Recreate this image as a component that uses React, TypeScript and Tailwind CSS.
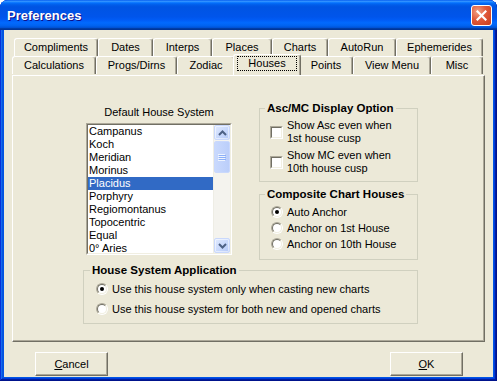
import React from "react";

const row1 = [
  { label: "Compliments", w: "w-[84px]" },
  { label: "Dates", w: "w-[55px]" },
  { label: "Interps", w: "w-[59px]" },
  { label: "Places", w: "w-[60px]" },
  { label: "Charts", w: "w-[56px]" },
  { label: "AutoRun", w: "w-[68px]" },
  { label: "Ephemerides", w: "w-[87px]" },
];

const row2 = [
  { label: "Calculations", w: "w-[84px]" },
  { label: "Progs/Dirns", w: "w-[81px]" },
  { label: "Zodiac", w: "w-[58px]" },
  { label: "Houses", w: "w-[68px]", selected: true },
  { label: "Points", w: "w-[54px]" },
  { label: "View Menu", w: "w-[78px]" },
  { label: "Misc", w: "w-[52px]" },
];

const houses = [
  "Campanus",
  "Koch",
  "Meridian",
  "Morinus",
  "Placidus",
  "Porphyry",
  "Regiomontanus",
  "Topocentric",
  "Equal",
  "0° Aries",
];

const tabBase =
  "flex-none h-[18px] flex items-center justify-center border-l border-t border-r border-l-white border-t-white border-r-[#716F64] rounded-t-[3px] shadow-[inset_-1px_0_0_#ACA899] leading-[13px]";

function Tab({ label, w, selected }: { label: string; w: string; selected?: boolean }) {
  if (selected) {
    return (
      <div
        className={`relative z-10 flex-none -mx-[2px] -mt-[2px] h-[21px] ${w} bg-[#ECE9D8] border-l border-t border-r border-l-white border-t-white border-r-[#716F64] rounded-t-[3px] shadow-[inset_-1px_0_0_#ACA899] px-[3px] pt-[1px]`}
      >
        <div className="h-[15px] border border-dotted border-black flex items-center justify-center leading-[13px]">
          {label}
        </div>
      </div>
    );
  }
  return <div className={`${tabBase} ${w}`}>{label}</div>;
}

function Checkbox() {
  return (
    <div className="flex-none w-[13px] h-[13px] border border-t-[#ACA899] border-l-[#ACA899] border-r-white border-b-white">
      <div className="w-full h-full border border-t-[#716F64] border-l-[#716F64] border-r-[#F1EFE2] border-b-[#F1EFE2] bg-white" />
    </div>
  );
}

function Radio({ checked }: { checked?: boolean }) {
  return (
    <div className="flex-none w-[12px] h-[12px] rounded-full border border-t-[#ACA899] border-l-[#ACA899] border-r-white border-b-white">
      <div className="w-full h-full rounded-full border border-t-[#716F64] border-l-[#716F64] border-r-[#F1EFE2] border-b-[#F1EFE2] bg-white flex items-center justify-center">
        {checked && <div className="w-[4px] h-[4px] rounded-full bg-black" />}
      </div>
    </div>
  );
}

function ScrollButton({ dir }: { dir: "up" | "down" }) {
  return (
    <div className="h-[15px] rounded-[2px] border border-[#C9D8FC] bg-[linear-gradient(135deg,#E1EAFE_0%,#C6D7FC_60%,#B4C8F6_100%)] flex items-center justify-center shadow-[inset_0_0_0_1px_#FFFFFF80]">
      <svg width="9" height="6" viewBox="0 0 9 6">
        {dir === "up" ? (
          <path d="M1 5 L4.5 1.5 L8 5" fill="none" stroke="#4D6185" strokeWidth="2" />
        ) : (
          <path d="M1 1 L4.5 4.5 L8 1" fill="none" stroke="#4D6185" strokeWidth="2" />
        )}
      </svg>
    </div>
  );
}

function Scrollbar() {
  return (
    <div className="flex-none w-[17px] flex flex-col bg-[#F4F3EE] border-l border-l-[#EEEDE5]">
      <ScrollButton dir="up" />
      <div className="mt-[1px] h-[32px] rounded-[2px] border border-[#C9D8FC] bg-[linear-gradient(90deg,#C9D9FD_0%,#BBCEFA_100%)] flex items-center justify-center">
        <svg width="8" height="8" viewBox="0 0 8 8">
          <path d="M0 1.5 H7 M0 3.5 H7 M0 5.5 H7 M0 7.5 H7" stroke="#EEF4FE" strokeWidth="1" />
          <path d="M1 2.5 H8 M1 4.5 H8 M1 6.5 H8" stroke="#8CB0F8" strokeWidth="1" />
        </svg>
      </div>
      <div className="flex-1" />
      <ScrollButton dir="down" />
    </div>
  );
}

function Button({ children }: { children: React.ReactNode }) {
  return (
    <div className="w-[73px] h-[24px] border border-t-white border-l-white border-r-[#716F64] border-b-[#716F64] shadow-[inset_-1px_-1px_0_#ACA899] flex items-center justify-center leading-[13px]">
      {children}
    </div>
  );
}

export default function App() {
  return (
    <div className="w-[497px] h-[381px] bg-white font-['Liberation_Sans',Arial,sans-serif] text-[11px] text-black">
      <div className="w-full h-full flex flex-col rounded-t-[8px] overflow-hidden bg-[#0055E5] shadow-[inset_-1px_-1px_#00138C,inset_1px_1px_#0831D9,inset_-2px_-2px_#001EA0,inset_2px_2px_#166AEE,inset_-3px_-3px_#003BDA,inset_3px_3px_#0855DD]">
        {/* Title bar */}
        <div className="flex-none h-[30px] flex items-center pl-[7px] pr-[5px] bg-[linear-gradient(180deg,#0058EE_0%,#3593FF_4%,#288EFF_6%,#127DFF_8%,#036FFC_10%,#0262EE_14%,#0057E5_20%,#0054E3_24%,#0055EB_56%,#005BF5_66%,#026AFE_76%,#0062EF_86%,#0052D6_92%,#0040AB_94%,#003092_100%)]">
          <div className="flex-1 text-white font-bold text-[13px] leading-[16px] [text-shadow:1px_1px_#0F1089] pt-[1px]">
            Preferences
          </div>
          <div className="w-[21px] h-[21px] rounded-[3px] border border-white bg-[radial-gradient(circle_at_30%_30%,#F2A286_0%,#E0593A_45%,#C83C1C_100%)] flex items-center justify-center">
            <svg width="11" height="11" viewBox="0 0 11 11">
              <path d="M1.5 1.5 L9.5 9.5 M9.5 1.5 L1.5 9.5" stroke="white" strokeWidth="2.2" strokeLinecap="square" />
            </svg>
          </div>
        </div>

        {/* Client area */}
        <div className="flex-1 mx-[4px] mb-[4px] bg-[#ECE9D8] flex flex-col pt-[8px] px-[8px]">
          <div className="w-[473px]">
            <div className="flex ml-[2px]">
              {row1.map((t) => (
                <Tab key={t.label} label={t.label} w={t.w} />
              ))}
            </div>
            <div className="flex">
              {row2.map((t) => (
                <Tab key={t.label} label={t.label} w={t.w} selected={t.selected} />
              ))}
            </div>
            {/* Panel */}
            <div className="h-[267px] border border-t-white border-l-white border-r-[#716F64] border-b-[#716F64] shadow-[inset_-1px_-1px_0_#ACA899] flex flex-col pt-[26px]">
              <div className="flex items-start pl-[73px]">
                {/* Left column */}
                <div className="w-[146px] flex flex-col">
                  <div className="mt-[4px] h-[13px] leading-[13px] text-center">Default House System</div>
                  <div className="mt-[4px] w-[146px] h-[132px] border border-t-[#ACA899] border-l-[#ACA899] border-r-white border-b-white">
                    <div className="w-full h-full border border-t-[#716F64] border-l-[#716F64] border-r-[#F1EFE2] border-b-[#F1EFE2] bg-white flex overflow-hidden">
                      <div className="flex-1 flex flex-col">
                        {houses.map((h) => (
                          <div
                            key={h}
                            className={`flex-none h-[13px] leading-[13px] pl-[1px] ${
                              h === "Placidus" ? "bg-[#316AC5] text-white" : ""
                            }`}
                          >
                            {h}
                          </div>
                        ))}
                      </div>
                      <Scrollbar />
                    </div>
                  </div>
                </div>

                {/* Right column */}
                <div className="ml-[27px] w-[159px] flex flex-col">
                  <fieldset className="min-w-0 m-0 p-0 border border-[#D0D0BF]">
                    <legend className="ml-[5px] px-[2px] font-bold text-[11.5px] leading-[13px]">
                      Asc/MC Display Option
                    </legend>
                    <div className="pt-[4px] pl-[10px] pb-[6px] flex flex-col">
                      <div className="flex items-center gap-[4px]">
                        <Checkbox />
                        <div className="leading-[13px]">
                          Show Asc even when
                          <br />
                          1st house cusp
                        </div>
                      </div>
                      <div className="mt-[4px] flex items-center gap-[4px]">
                        <Checkbox />
                        <div className="leading-[13px]">
                          Show MC even when
                          <br />
                          10th house cusp
                        </div>
                      </div>
                    </div>
                  </fieldset>

                  <fieldset className="mt-[6px] min-w-0 m-0 p-0 border border-[#D0D0BF]">
                    <legend className="ml-[5px] px-[2px] font-bold text-[11.5px] leading-[13px]">
                      Composite Chart Houses
                    </legend>
                    <div className="pt-[3px] pl-[11px] pb-[7px] flex flex-col">
                      <div className="h-[16px] flex items-center gap-[4px]">
                        <Radio checked />
                        <span className="leading-[13px]">Auto Anchor</span>
                      </div>
                      <div className="h-[16px] flex items-center gap-[4px]">
                        <Radio />
                        <span className="leading-[13px]">Anchor on 1st House</span>
                      </div>
                      <div className="h-[16px] flex items-center gap-[4px]">
                        <Radio />
                        <span className="leading-[13px]">Anchor on 10th House</span>
                      </div>
                    </div>
                  </fieldset>
                </div>
              </div>

              <div className="pl-[70px] mt-[4px]">
                <fieldset className="w-[335px] min-w-0 m-0 p-0 border border-[#D0D0BF]">
                  <legend className="ml-[6px] px-[2px] font-bold text-[11.5px] leading-[13px]">
                    House System Application
                  </legend>
                  <div className="pt-[2px] pl-[12px] pb-[4px] flex flex-col">
                    <div className="h-[20px] flex items-center gap-[4px]">
                      <Radio checked />
                      <span className="leading-[13px]">Use this house system only when casting new charts</span>
                    </div>
                    <div className="h-[20px] flex items-center gap-[4px]">
                      <Radio />
                      <span className="leading-[13px]">Use this house system for both new and opened charts</span>
                    </div>
                  </div>
                </fieldset>
              </div>
            </div>
          </div>

          {/* Buttons */}
          <div className="flex justify-between mt-[10px] pl-[23px] pr-[22px]">
            <Button>
              <span>
                <span className="underline">C</span>ancel
              </span>
            </Button>
            <Button>
              <span>
                <span className="underline">O</span>K
              </span>
            </Button>
          </div>
        </div>
      </div>
    </div>
  );
}
